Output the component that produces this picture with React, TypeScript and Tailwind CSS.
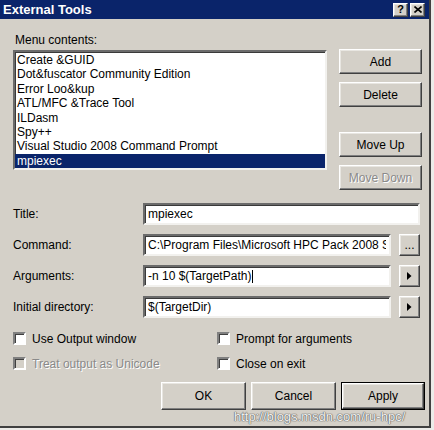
const raised =
  "border border-t-white border-l-white border-r-[#404040] border-b-[#404040] shadow-[inset_-1px_-1px_0_#808080,inset_1px_1px_0_#e8e6e1] bg-[#d4d0c8]";
const sunken =
  "border-2 border-t-[#6b6b6b] border-l-[#6b6b6b] border-r-[#f2f1ee] border-b-[#f2f1ee] bg-white shadow-[inset_1px_1px_0_#3a3a3a]";

const items = [
  "Create &GUID",
  "Dot&fuscator Community Edition",
  "Error Loo&kup",
  "ATL/MFC &Trace Tool",
  "ILDasm",
  "Spy++",
  "Visual Studio 2008 Command Prompt",
  "mpiexec",
];

function Arrow() {
  return (
    <svg width="5" height="8" viewBox="0 0 5 8">
      <path d="M0 0 L4.5 4 L0 8 Z" fill="#000" />
    </svg>
  );
}

function SideButton({ label, disabled }: { label: string; disabled?: boolean }) {
  return (
    <div
      className={`${raised} h-[25px] w-[83px] flex items-center justify-center ${disabled ? "text-[#8a8a8a] [text-shadow:1px_1px_0_#fff]" : "text-black"}`}
    >
      {label}
    </div>
  );
}

function Checkbox({ label, disabled }: { label: string; disabled?: boolean }) {
  return (
    <div className="flex items-center h-[13px] gap-[6px]">
      <div
        className={`w-[13px] h-[13px] border-2 border-t-[#808080] border-l-[#808080] border-r-white border-b-white shadow-[inset_1px_1px_0_#404040] ${disabled ? "bg-[#d4d0c8]" : "bg-white"}`}
      />
      <span className={disabled ? "text-[#8a8a8a] [text-shadow:1px_1px_0_#fff]" : "text-black"}>
        {label}
      </span>
    </div>
  );
}

function Row({
  label,
  children,
  extra,
}: {
  label: string;
  children: React.ReactNode;
  extra?: React.ReactNode;
}) {
  return (
    <div className="flex items-center h-[22px]">
      <div className="w-[130px] shrink-0">{label}</div>
      <div className={`${sunken} h-[22px] flex-1 min-w-0 flex items-center px-[3px] overflow-hidden whitespace-nowrap`}>
        {children}
      </div>
      {extra && (
        <div className={`${raised} ml-[8px] w-[21px] h-[22px] flex items-center justify-center shrink-0`}>
          {extra}
        </div>
      )}
    </div>
  );
}

export default function App() {
  return (
    <div className="w-[434px] h-[430px] bg-[#ecebe8] text-[12px] leading-[14px] font-['Liberation_Sans',Arial,sans-serif] text-black">
      <div className="relative w-[431px] h-[428px] bg-[#d4d0c8] border-r-2 border-b-2 border-[#404040] flex flex-col">
        {/* title bar */}
        <div className="h-[19px] bg-[#0a246a] flex items-center pl-[3px] pr-[4px]">
          <span className="text-white font-bold text-[13px] flex-1">External Tools</span>
          <div className={`${raised} w-[15px] h-[14px] flex items-center justify-center font-bold text-[11px] leading-none`}>
            ?
          </div>
          <div className={`${raised} ml-[2px] w-[15px] h-[14px] flex items-center justify-center`}>
            <svg width="8" height="7" viewBox="0 0 8 7">
              <path d="M0.5 0.5 L7.5 6.5 M7.5 0.5 L0.5 6.5" stroke="#000" strokeWidth="1.6" />
            </svg>
          </div>
        </div>

        <div className="flex flex-col pl-[13px] pr-[7px]">
          <div className="mt-[15px] h-[13px] leading-[13px] pl-[2px]">Menu contents:</div>

          <div className="flex items-start mt-[3px]">
            <div className={`${sunken} w-[314px] h-[120px] pt-[1px]`}>
              {items.map((it, i) => (
                <div
                  key={it}
                  className={`h-[14.4px] leading-[14.4px] pl-[2px] whitespace-nowrap ${i === items.length - 1 ? "bg-[#0a246a] text-white" : ""}`}
                >
                  {it}
                </div>
              ))}
            </div>
            <div className="ml-[12px] -mt-px flex flex-col">
              <SideButton label="Add" />
              <div className="h-[8px]" />
              <SideButton label="Delete" />
              <div className="h-[25px]" />
              <SideButton label="Move Up" />
              <div className="h-[8px]" />
              <SideButton label="Move Down" disabled />
            </div>
          </div>

          <div className="mt-[13px] flex flex-col gap-[9px] pr-[2px]">
            <Row label="Title:">mpiexec</Row>
            <Row label="Command:" extra={<span className="leading-[10px] h-[10px]">...</span>}>
              <span className="block overflow-hidden">C:\Program Files\Microsoft HPC Pack 2008 SDK</span>
            </Row>
            <Row label="Arguments:" extra={<Arrow />}>
              -n 10 $(TargetPath)
              <span className="inline-block w-px h-[13px] bg-black ml-px" />
            </Row>
            <Row label="Initial directory:" extra={<Arrow />}>
              $(TargetDir)
            </Row>
          </div>

          <div className="mt-[14px] grid grid-cols-[204px_1fr] gap-y-[12px]">
            <Checkbox label="Use Output window" />
            <Checkbox label="Prompt for arguments" />
            <Checkbox label="Treat output as Unicode" disabled />
            <Checkbox label="Close on exit" />
          </div>

          <div className="mt-[12px] flex justify-end gap-[5px] -mr-[3px]">
            <div className={`${raised} w-[85px] h-[28px] flex items-center justify-center`}>OK</div>
            <div className={`${raised} w-[85px] h-[28px] flex items-center justify-center`}>Cancel</div>
            <div className="w-[84px] h-[28px] border border-black">
              <div className={`${raised} w-full h-full flex items-center justify-center`}>Apply</div>
            </div>
          </div>
        </div>

        <div className="absolute left-[234px] top-[410px] text-[13px] leading-[14px] text-[#f2f2f2] [text-shadow:0_0_1px_#555,0_0_1px_#555,0_0_1px_#777] whitespace-nowrap">
          http://blogs.msdn.com/ru-hpc/
        </div>
      </div>
    </div>
  );
}
